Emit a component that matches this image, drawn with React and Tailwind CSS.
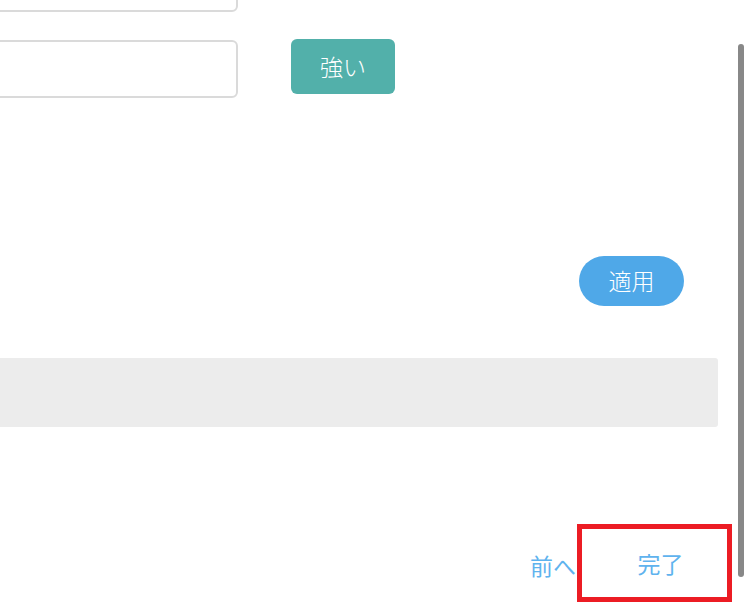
export default function App() {
  return (
    <div
      className="relative w-[750px] h-[615px] overflow-hidden bg-white"
      style={{ fontFamily: '"Noto Sans CJK JP", "Noto Sans", sans-serif' }}
    >
      <div className="flex flex-col mt-[-46px]">
        {/* first input, mostly scrolled off */}
        <div className="ml-[-100px] w-[338px] h-[58px] rounded-md border-2 border-[#dadada] bg-white" />

        {/* second input + strength badge */}
        <div className="flex items-start mt-[28px]">
          <div className="ml-[-100px] w-[338px] h-[58px] rounded-md border-2 border-[#dadada] bg-white" />
          <div className="ml-[53px] mt-[-1px] w-[104px] h-[55px] rounded-md bg-[#52b0aa] text-white text-[23px] font-light flex items-center justify-center">
            強い
          </div>
        </div>

        {/* apply */}
        <div className="flex justify-end pr-[66px] mt-[158px]">
          <button className="w-[105px] h-[50px] rounded-full bg-[#4fa8e8] text-white text-[23px] font-light flex items-center justify-center pb-[2px]">
            適用
          </button>
        </div>

        {/* grey panel */}
        <div className="mt-[52px] ml-[-10px] mr-[32px] h-[69px] rounded-[3px] bg-[#ececec]" />

        {/* footer nav */}
        <div className="flex justify-end items-center pr-[18px] mt-[97px]">
          <span className="text-[23px] text-[#5fb3ee] mt-[4px] mr-[1px]">前へ</span>
          <div className="w-[155px] h-[78px] border-[5px] border-[#ec1c24] flex items-center justify-center pl-[12px]">
            <span className="text-[23px] text-[#5fb3ee]">完了</span>
          </div>
        </div>
      </div>

      {/* scrollbar thumb */}
      <div className="absolute left-[738px] top-[44px] w-[6px] h-[533px] rounded-full bg-[#888888]" />
    </div>
  );
}
